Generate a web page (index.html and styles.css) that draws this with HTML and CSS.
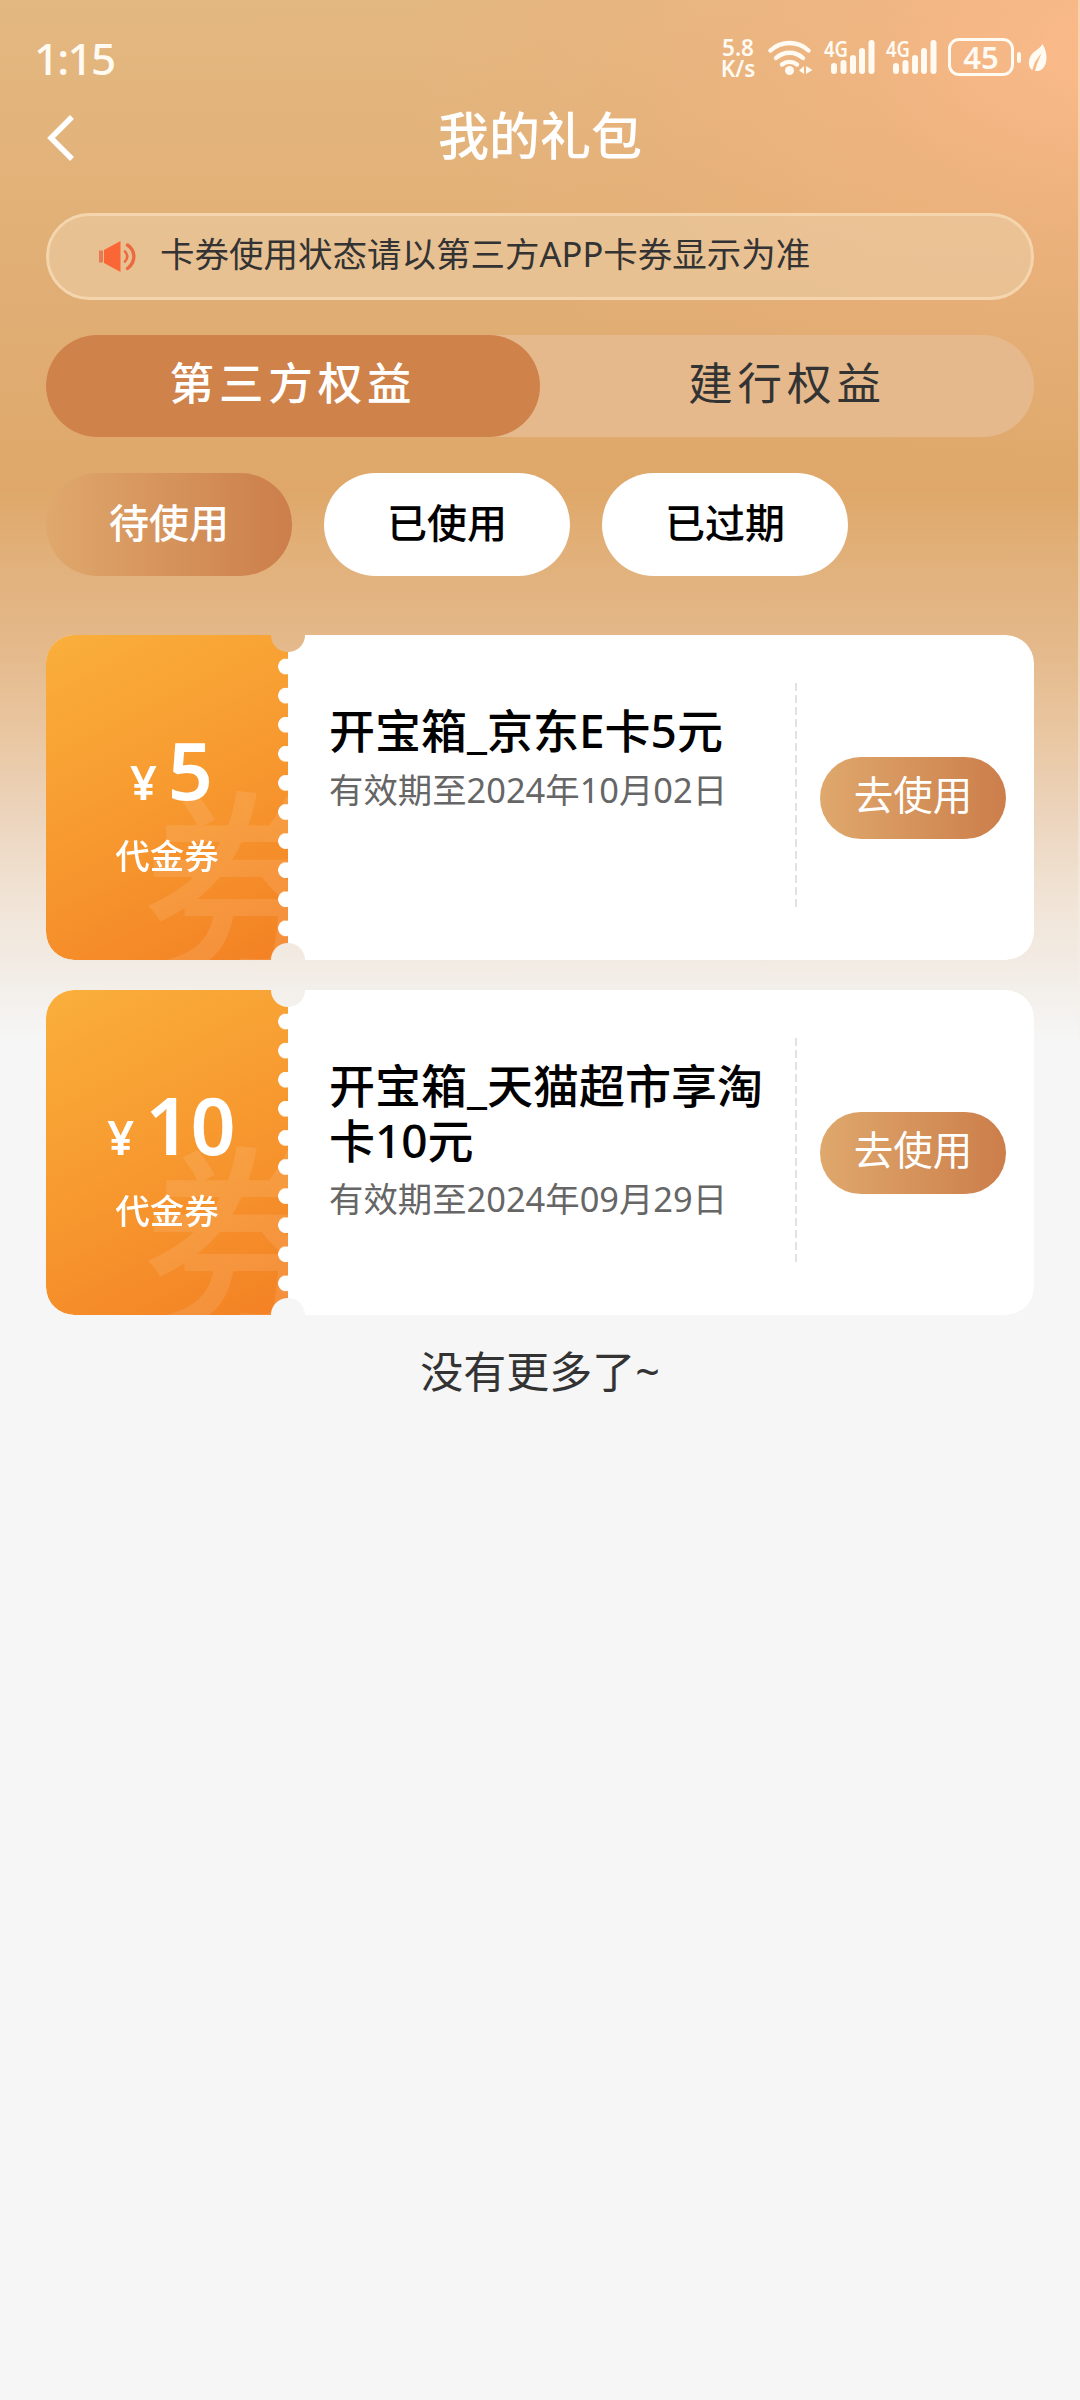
FILE: index.html
```html
<!DOCTYPE html>
<html lang="zh-CN">
<head>
<meta charset="utf-8">
<title>我的礼包</title>
<link rel="stylesheet" href="styles.css">
</head>
<body>
<div class="page">
  <div class="status">
    <span class="clock">1:15</span>
    <div class="status-icons">
      <div class="speed"><span>5.8</span><span>K/s</span></div>
      <svg class="wifi" width="45" height="38" viewBox="0 0 45 38" fill="none" stroke="#fffaf2" stroke-width="4.4" stroke-linecap="round">
        <path d="M2.500 11.500a28 28 0 0 1 38 0"/>
        <path d="M8 19a20 20 0 0 1 27 0"/>
        <path d="M14 25.500a12 12 0 0 1 15 0"/>
        <circle cx="21.500" cy="31.500" r="4.500" fill="#fffaf2" stroke="none"/>
        <path d="M36 27v8l-5-3.500zM38 27v8l6.500-4z" fill="#fffaf2" stroke="none"/>
      </svg>
      <svg class="signal" width="52" height="38" viewBox="0 0 52 38" fill="#fffaf2">
        <text x="0" y="18" class="net" textLength="24" lengthAdjust="spacingAndGlyphs">4G</text>
        <rect x="7" y="24" width="6" height="11" rx="3"/><rect x="16.500" y="21" width="6" height="14" rx="3"/><rect x="26" y="16" width="6" height="19" rx="3"/><rect x="35" y="9" width="6" height="26" rx="3"/><rect x="44.500" y="1" width="6" height="34" rx="3"/>
      </svg>
      <svg class="signal" width="52" height="38" viewBox="0 0 52 38" fill="#fffaf2">
        <text x="0" y="18" class="net" textLength="24" lengthAdjust="spacingAndGlyphs">4G</text>
        <rect x="7" y="24" width="6" height="11" rx="3"/><rect x="16.500" y="21" width="6" height="14" rx="3"/><rect x="26" y="16" width="6" height="19" rx="3"/><rect x="35" y="9" width="6" height="26" rx="3"/><rect x="44.500" y="1" width="6" height="34" rx="3"/>
      </svg>
      <div class="battery">45</div>
      <div class="nub"></div>
      <svg class="leaf" width="20" height="30" viewBox="0 0 20 30"><path fill="#fffaf2" d="M14.500 1C19 8 20 18 16 24c-2.500 3.500-6 4.500-9 4l2-7 4.500-11L7 19l-2.800 8.200C-1 23 0 14 6 9c3-2.500 6.500-4 8.500-8z"/></svg>
    </div>
  </div>

  <header class="navbar">
    <svg class="back" width="30" height="48" viewBox="0 0 30 48" fill="none" stroke="#fff" stroke-width="5.500"><path d="M26 3 5 24l21 21"/></svg>
    <h1 class="title">我的礼包</h1>
  </header>

  <main class="content">
    <div class="notice">
      <svg width="40" height="34" viewBox="0 0 40 34"><path fill="#e87a52" d="M1 10.500h4v12H1z"/><path fill="#fb6637" d="M6 10 22.500 1v31L6 23z"/><g fill="none" stroke="#ec6a40" stroke-linecap="round"><path stroke-width="2.600" d="M27 11.500q4.500 5 0 10"/><path stroke-width="3.400" d="M29.500 5c8.500 6 8.500 17 0 23.500"/></g></svg>
      <span class="notice-text">卡券使用状态请以第三方APP卡券显示为准</span>
    </div>

    <nav class="tabs">
      <div class="tab tab-active">第三方权益</div>
      <div class="tab">建行权益</div>
    </nav>

    <div class="filters">
      <div class="filter filter-active">待使用</div>
      <div class="filter">已使用</div>
      <div class="filter">已过期</div>
    </div>

    <section class="coupons">
      <article class="coupon">
        <div class="stub">
          <span class="mark">券</span>
          <div class="price"><span class="yen">¥</span><span class="amount">5</span></div>
          <div class="kind">代金券</div>
          <div class="holes"></div>
        </div>
        <div class="info">
          <h2 class="name">开宝箱_京东E卡5元</h2>
          <p class="date">有效期至2024年10月02日</p>
        </div>
        <div class="divider"></div>
        <div class="action"><div class="use">去使用</div></div>
      </article>
      <article class="coupon">
        <div class="stub">
          <span class="mark">券</span>
          <div class="price"><span class="yen">¥</span><span class="amount">10</span></div>
          <div class="kind">代金券</div>
          <div class="holes"></div>
        </div>
        <div class="info">
          <h2 class="name">开宝箱_天猫超市享淘卡10元</h2>
          <p class="date">有效期至2024年09月29日</p>
        </div>
        <div class="divider"></div>
        <div class="action"><div class="use">去使用</div></div>
      </article>
    </section>
    <p class="end">没有更多了~</p>
  </main>
</div>
</body>
</html>
```
FILE: styles.css
```css
* { box-sizing: border-box; margin: 0; padding: 0; }

body {
  background: #f6f6f6;
  font-family: "Noto Sans", "Noto Sans CJK SC", sans-serif;
}

.page {
  width: 1080px;
  height: 2400px;
  overflow: hidden;
  background:
    linear-gradient(to bottom, rgba(250, 230, 208, .5), rgba(245, 240, 235, .5)) 1078px 0 / 2px 1040px no-repeat,
    radial-gradient(ellipse 720px 420px at 1120px 50px, rgba(255, 186, 140, .9) 0%, rgba(250, 180, 132, .5) 35%, rgba(240, 174, 124, .25) 72%, rgba(236, 172, 120, 0) 100%) no-repeat,
    linear-gradient(to bottom, #e4b881 0, #e0ad73 330px, #dfa86a 490px, #e2b27d 570px, #e4b889 640px, #e9c6a0 730px, #ecd5be 820px, #f1e4d6 900px, #f2ece5 970px, #f6f6f6 1040px);
}

.status {
  display: flex;
  justify-content: space-between;
  height: 100px;
  padding: 38px 32px 0 34px;
  color: #fffaf2;
}
.clock { font-size: 44px; line-height: 41px; font-weight: 500; letter-spacing: -1.800px; }
.status-icons { display: flex; height: 40px; }
.speed {
  display: flex;
  flex-direction: column;
  align-items: center;
  width: 36px;
  margin-right: 12px;
  font-size: 22.500px;
  line-height: 20.500px;
  font-weight: 600;
}
.wifi { margin: 1px 11px 0 0; }
.signal { margin: 1px 10px 0 0; overflow: visible; }
.net { font: 600 21.500px "Noto Sans", sans-serif; }
.battery {
  width: 66px;
  height: 38px;
  border: 3px solid #fffaf2;
  border-radius: 11px;
  font-size: 31px;
  line-height: 32px;
  font-weight: 600;
  text-align: center;
}
.nub { width: 4px; height: 11px; margin: 14px 7px 0 3px; border-radius: 2px; background: #fffaf2; }
.leaf { margin-top: 5px; }

.navbar { display: flex; align-items: center; height: 76px; padding: 0 46px; }
.back { width: 30px; }
.title {
  flex: 1;
  margin-right: 30px;
  padding-bottom: 6px;
  text-align: center;
  font-size: 51px;
  line-height: 69px;
  font-weight: 500;
  color: #fff;
}

.content { padding: 37px 46px 0; }
.notice {
  display: flex;
  align-items: center;
  gap: 22px;
  height: 87px;
  padding: 0 50px 0 49px;
  border: 3px solid #f5d5ad;
  border-radius: 44px;
  background: rgba(235, 205, 165, .6);
  font-size: 34.500px;
  line-height: 44px;
  color: #333;
}
.notice-text { padding-bottom: 5px; }
.tabs {
  display: flex;
  height: 102px;
  margin-top: 35px;
  border-radius: 51px;
  background: #e5b98c;
}
.tab {
  flex: 1;
  border-radius: 51px;
  text-align: center;
  font-size: 44.500px;
  line-height: 96px;
  letter-spacing: 4.900px;
  color: #333;
}
.tab-active { background: #cf824a; color: #fff; font-weight: 500; }

.filters { display: flex; gap: 32px; margin-top: 36px; }
.filter {
  width: 246px;
  height: 103px;
  border-radius: 52px;
  background: #fff;
  text-align: center;
  font-size: 40px;
  line-height: 100px;
  font-weight: 500;
  color: #000;
}
.filter-active { background: linear-gradient(to right, #dfa86c, #cc7e4b); color: #fff; }

.coupons { display: flex; flex-direction: column; gap: 30px; margin-top: 59px; }
.coupon {
  display: flex;
  height: 325px;
  border-radius: 28px;
  background: #fff;
  mask-image: radial-gradient(circle at 242px 0, transparent 16.500px, #000 17.500px),
    radial-gradient(circle at 242px 100%, transparent 16.500px, #000 17.500px);
  mask-composite: intersect;
}
.stub {
  position: relative;
  width: 242px;
  overflow: hidden;
  padding-top: 87px;
  border-radius: 28px 0 0 28px;
  background: linear-gradient(153deg, #faaf3c 0%, #f7992f 50%, #f38124 100%);
  color: #fff;
  text-align: center;
}
.mark {
  position: absolute;
  left: 96px;
  top: 149px;
  font-size: 200px;
  line-height: 200px;
  font-weight: 500;
  color: rgba(255, 255, 255, .1);
}
.price { position: relative; display: flex; justify-content: center; align-items: baseline; gap: 11px; padding-left: 9px; line-height: 95px; }
.yen { font-size: 47px; font-weight: 600; }
.amount { font-size: 79px; font-weight: 600; }
.kind { position: relative; font-size: 34.500px; line-height: 44px; font-weight: 500; margin-top: 4px; }
.holes {
  position: absolute;
  right: 0;
  top: 17px;
  width: 10.500px;
  height: 291px;
  background: radial-gradient(circle at 8px 14.500px, #fff 7.500px, transparent 8.200px) 0 0 / 10.500px 29.100px repeat-y;
}
.info { width: 507px; padding: 68px 20px 0 41px; }
.name { font-size: 46px; line-height: 54.500px; font-weight: 500; color: #000; }
.date { margin-top: 7px; font-size: 34.400px; line-height: 50px; color: #666; white-space: nowrap; }
.divider {
  width: 2px;
  height: 228px;
  margin-top: 48px;
  background: repeating-linear-gradient(to bottom, #e2e2e2 0 8px, transparent 8px 12px);
}
.action { flex: 1; padding: 122px 0 0 23px; }
.use {
  width: 186px;
  height: 82px;
  border-radius: 41px;
  background: linear-gradient(to right, #dfa86c, #cc7e4b);
  color: #fff;
  text-align: center;
  font-size: 39.500px;
  line-height: 77px;
}
.end { margin-top: 26px; text-align: center; font-size: 43px; line-height: 62px; color: #333; }
```
